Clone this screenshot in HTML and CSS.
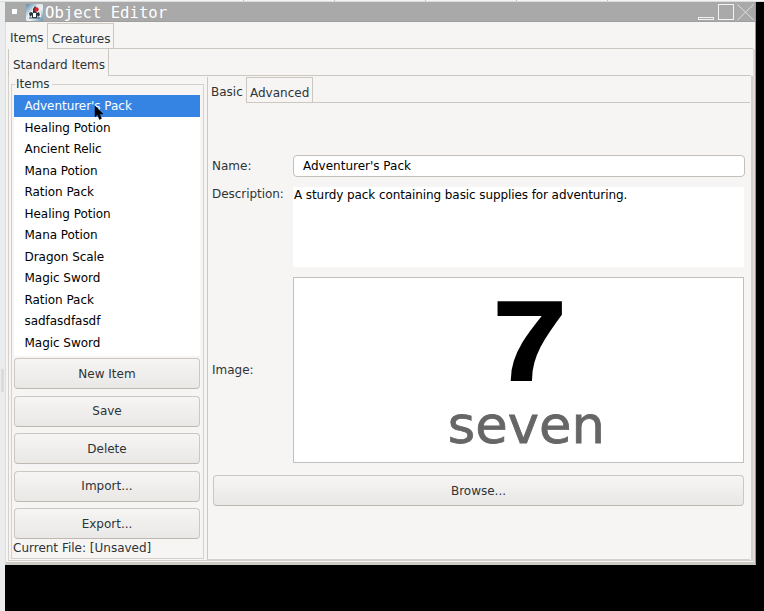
FILE: index.html
```html
<!DOCTYPE html>
<html lang="en">
<head>
<meta charset="utf-8">
<title>Object Editor</title>
<link rel="stylesheet" href="styles.css">
</head>
<body>
<div class="backdrop-top"><i></i><i></i><i></i><i></i><i></i></div>
<div class="desktop">
  <div class="strip"><span class="grip"></span></div>
  <main class="window">
    <header class="titlebar">
      <span class="menu-dot"></span>
      <svg class="app-icon" width="17" height="17" viewBox="0 0 17 17">
        <defs><linearGradient id="g" x2="1" y2="1"><stop stop-color="#5385a8"/><stop offset=".4" stop-color="#dfe9ef"/><stop offset=".6" stop-color="#e9f0f4"/><stop offset="1" stop-color="#5b8fb0"/></linearGradient></defs>
        <rect width="17" height="17" rx="1.5" fill="url(#g)"/>
        <path d="M2 13V9l4-2 1-4 3-1 2 4 3 3v4z" fill="#eef1f2"/>
        <path d="M3 9l2-1 2 1V5l2-3 1 1-1 3 2 3 2-1 1 3-2 2-1-2v3H6v-3l-2 2z" fill="#28343b"/>
        <path d="M7 9h3v4H7z" fill="#fff"/>
        <circle cx="10.500" cy="5.500" r="2.200" fill="#da2428"/>
        <path d="M3 14h11" stroke="#3f5561"/>
      </svg>
      <h1>Object Editor</h1>
      <svg class="controls" width="58" height="18" viewBox="0 0 58 18" fill="none" stroke="#f2f2f2">
        <rect x="1.500" y="14.500" width="15" height="2"/>
        <rect x="21.500" y="1.500" width="15" height="15"/>
        <path d="M40.500 1.500l16 15.500M56.500 1.500l-16 15.500" stroke="#dedede"/>
      </svg>
    </header>
    <nav class="tabs tabs-main"><span class="tab on">Items</span><span class="tab off">Creatures</span><span class="rest"></span></nav>
    <div class="pane-main">
      <nav class="tabs tabs-sub"><span class="tab on">Standard Items</span><span class="rest"></span></nav>
      <div class="pane-sub">
        <section class="items">
          <h2><span>Items</span></h2>
          <ul class="list">
            <li class="selected">Adventurer's Pack<svg class="cursor" width="10" height="16" viewBox="0 0 10 16"><path d="M1 1v11l2.500-2.500 2 5 2-1-2-4.500H9z" fill="#000" stroke="#000" stroke-width=".5"/></svg></li>
            <li>Healing Potion</li><li>Ancient Relic</li><li>Mana Potion</li><li>Ration Pack</li><li>Healing Potion</li><li>Mana Potion</li><li>Dragon Scale</li><li>Magic Sword</li><li>Ration Pack</li><li>sadfasdfasdf</li><li>Magic Sword</li>
          </ul>
          <div class="buttons"><button>New Item</button><button>Save</button><button>Delete</button><button>Import...</button><button>Export...</button></div>
          <p class="file">Current File: [Unsaved]</p>
        </section>
        <section class="details">
          <nav class="tabs tabs-detail"><span class="tab on">Basic</span><span class="tab off">Advanced</span><span class="rest"></span></nav>
          <div class="form">
            <label class="name-label">Name:</label><div class="field">Adventurer's Pack</div>
            <label class="desc-label">Description:</label><div class="area">A sturdy pack containing basic supplies for adventuring.</div>
            <label class="image-label">Image:</label>
            <div class="image"><b>7</b><span>seven</span></div>
            <button class="browse">Browse...</button>
          </div>
        </section>
      </div>
    </div>
  </main>
</div>
</body>
</html>
```
FILE: styles.css
```css
* { box-sizing: border-box; }
body {
  margin: 0;
  width: 764px;
  height: 611px;
  overflow: hidden;
  background: #000;
  color: #2e3436;
  font: 12px/16px "DejaVu Sans", sans-serif;
}
h1, h2, p, ul { margin: 0; padding: 0; font-weight: normal; }
.backdrop-top { height: 2px; display: flex; padding-left: 153px; background: #f3f5f5; border-bottom: 1px solid #dadcdc; }
.backdrop-top i { width: 91px; border-right: 1px solid #bbb; }
.desktop { height: 609px; display: flex; }
.strip { width: 5px; background: #ebecee; display: flex; align-items: flex-start; }
.grip { width: 3px; height: 23px; margin: 367px 0 0 1px; background: #d9dbdd; }
.window {
  width: 751px;
  height: 563px;
  background: #f6f5f4;
  border: solid #aaa;
  border-width: 0 1px 2px;
  border-color: #aaa #969696 #cecac5 #deddda;
  display: flex;
  flex-direction: column;
}
.titlebar {
  height: 20px;
  margin: 0 0 0 -1px;
  background: #a9a9a9;
  border-bottom: 1px solid #9f9f9f;
  display: flex;
  align-items: center;
  flex: none;
}
.menu-dot { width: 5px; height: 5px; margin-left: 7px; background: #fff; }
.app-icon { margin: 1px 0 0 9px; }
.titlebar h1 { font: 15.600px/20px "DejaVu Sans Mono", monospace; color: #fff; margin: 2px 0 0 2px; }
.controls { margin-left: auto; }

.tabs { display: flex; flex: none; }
.tab { white-space: nowrap; }
.tab.off { border: 1px solid #cdc7c2; }
.rest { flex: 1; border-bottom: 1px solid #cdc7c2; }
.tabs-main { height: 27px; margin-right: 2px; }
.tabs-main .on { width: 41px; padding: 8px 0 0 4px; }
.tabs-main .off { width: 67px; padding: 7px 0 0 4px; margin-top: 1px; }
.pane-main {
  flex: 1;
  border-right: 2px solid #dfdcd8;
  border-bottom: 1px solid #cdc7c2;
  padding: 0 0 1px 2px;
  display: flex;
  flex-direction: column;
}
.tabs-sub { height: 27px; border-left: 1px solid #cdc7c2; margin-right: 2px; }
.tabs-sub .on { width: 100px; padding: 8px 0 0 4px; border-right: 1px solid #cdc7c2; }
.pane-sub {
  flex: 1;
  display: flex;
  border: solid #d5d0cc;
  border-width: 0 2px 1px 1px;
  padding: 1px 1px 0 2px;
}
.items { width: 193px; position: relative; padding: 18px 4px 0 3px; display: flex; flex-direction: column; }
.items::before { content: ""; position: absolute; inset: 7px 0 1px; border: 1px solid #d5d0cc; }
.items h2 { position: absolute; top: -1px; left: 4px; font-size: 12px; line-height: 16px; background: #f6f5f4; padding: 0 2px 0 1px; }
.list { position: relative; list-style: none; height: 261px; background: #fff; color: #000; display: grid; grid-template-rows: repeat(12, 21.540px); }
.list li { padding-left: 10.500px; line-height: 22px; letter-spacing: -.040px; }
.list .selected { background: #3584e4; color: #fff; position: relative; }
.cursor { position: absolute; left: 80px; top: 10px; }
.buttons { position: relative; display: grid; gap: 6.500px; margin-top: 2px; }
button {
  height: 31px;
  padding: 0;
  border: 1px solid #cdc7c2;
  border-bottom-color: #bfb8b1;
  border-radius: 4px;
  background: linear-gradient(#f6f5f4, #e9e8e6);
  color: #2e3436;
  font: inherit;
}
.file { position: relative; line-height: 17px; margin: 1px -1px 0; white-space: nowrap; }
.details { flex: 1; margin-left: 3px; border-left: 1px solid #cdc7c2; display: flex; flex-direction: column; border-bottom: 1px solid #d5d0cc; }
.tabs-detail { height: 26px; }
.tabs-detail .on { width: 38px; padding: 7px 0 0 3px; }
.tabs-detail .off { width: 67px; padding: 7px 0 0 3px; }
.form {
  display: grid;
  grid-template-columns: 81px 452px;
  grid-template-rows: 22px 80px 186px 31px;
  row-gap: 10px;
  padding: 52px 0 0 4px;
}
.field { border: 1px solid #c5bfb9; border-radius: 4px; background: #fff; color: #000; padding: 2px 0 0 9px; }
.name-label { padding-top: 3px; }
.desc-label { margin-top: -1px; letter-spacing: -.050px; }
.area { background: #fff; color: #000; margin-right: 1px; padding-left: 1px; letter-spacing: -.090px; }
.image-label { align-self: center; }
.image {
  border: 1px solid #c0c0c0;
  margin-right: 1px;
  background: #fff;
  display: flex;
  flex-direction: column;
  align-items: center;
}
.image b {
  font: bold 114px/80px "Liberation Sans", sans-serif;
  height: 122px;
  padding-top: 23px;
  color: #000;
  -webkit-text-stroke: 2px #000;
  transform: translateX(11px) scaleX(1.160);
}
.image span { font: 52px/50px "DejaVu Sans", sans-serif; color: #666; transform: translateX(8px) scaleX(1.015); -webkit-text-stroke: .8px #666; }
.browse { grid-column: 1 / 3; margin: 2px 1px -2px 1px; }
```
